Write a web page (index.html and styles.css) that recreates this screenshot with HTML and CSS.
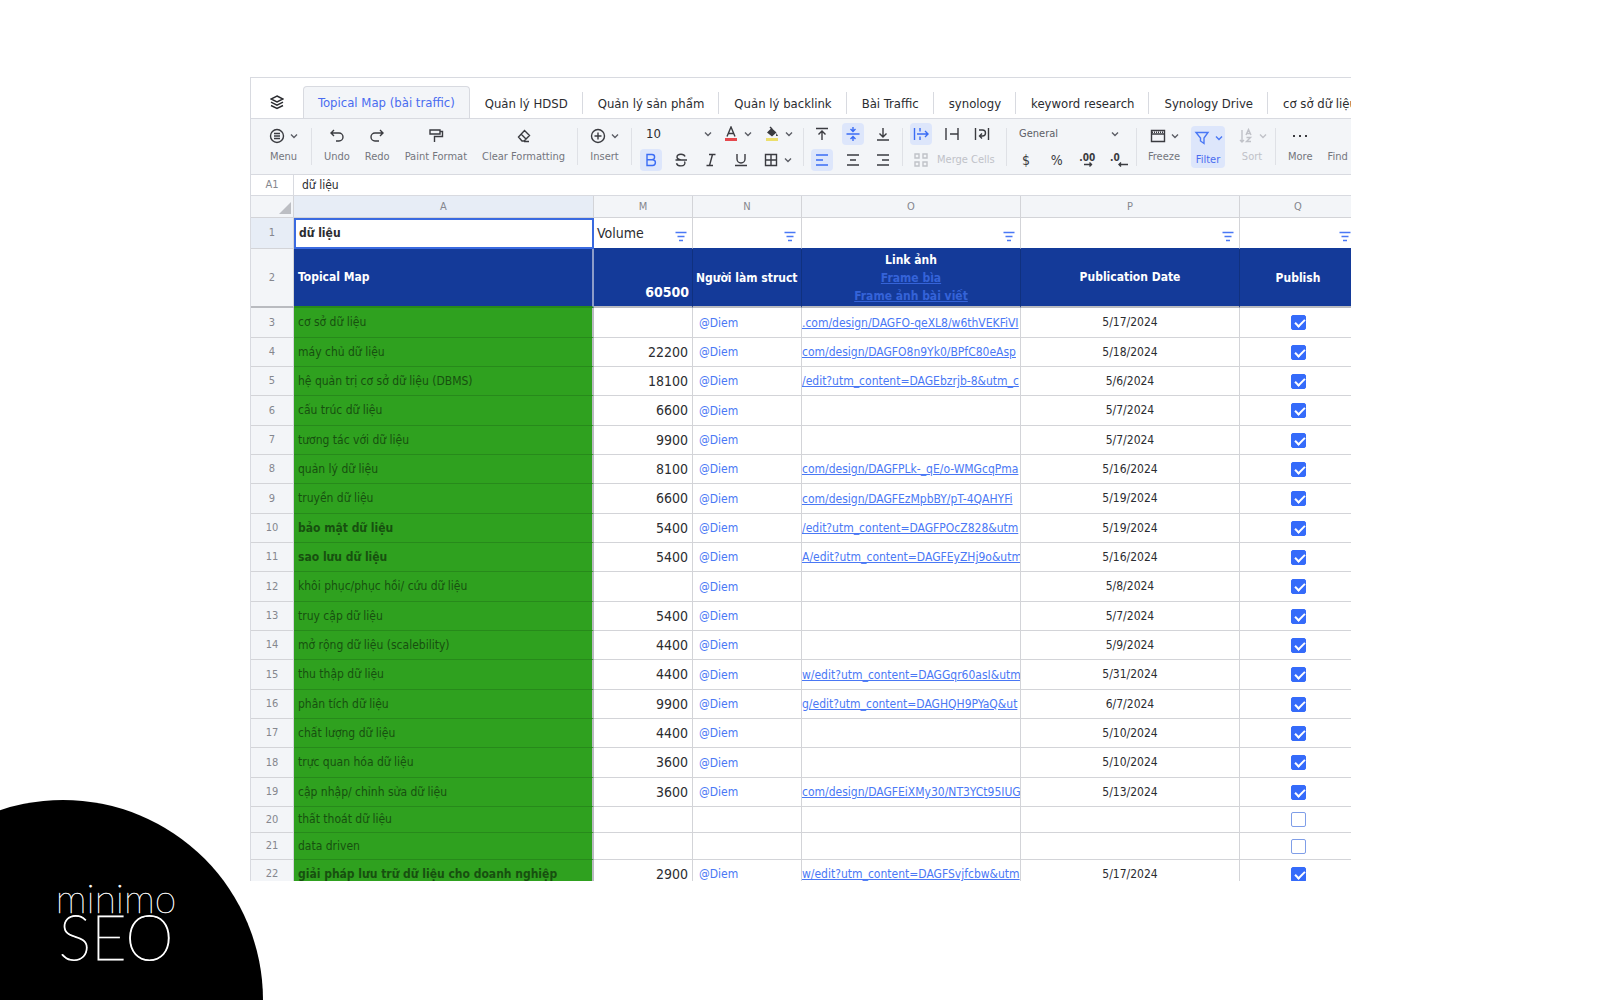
FILE: index.html
```html
<!DOCTYPE html>
<html lang="vi">
<head>
<meta charset="utf-8">
<title>Topical Map (bài traffic)</title>
<link rel="stylesheet" href="styles.css">
</head>
<body>
<svg class="defs" aria-hidden="true">
  <symbol id="chev" viewBox="0 0 8 8"><path d="M1 2.5l3 3 3-3"/></symbol>
  <symbol id="filter" viewBox="0 0 12 11"><path d="M0.5 1.5h11M2.5 5.5h7M4 9.5h4"/></symbol>
</svg>
<main class="page">
  <section class="sheet">
    <nav class="tabs" aria-label="Sheets">
      <button class="layers" aria-label="All sheets"><svg width="14" height="15" viewBox="0 0 14 15"><path d="M7 1L13 4 7 7 1 4zM1 7.200l6 3 6-3M1 10.500l6 3 6-3"/></svg></button>
      <button class="tab active">Topical Map (bài traffic)</button>
      <button class="tab">Quản lý HDSD</button>
      <button class="tab">Quản lý sản phẩm</button>
      <button class="tab">Quản lý backlink</button>
      <button class="tab">Bài Traffic</button>
      <button class="tab">synology</button>
      <button class="tab">keyword research</button>
      <button class="tab">Synology Drive</button>
      <button class="tab">cơ sở dữ liệu</button>
    </nav>

    <div class="toolbar" role="toolbar">
      <div class="group menu">
        <button class="tool"><span class="ico"><svg width="16" height="16" viewBox="0 0 16 16"><circle cx="8" cy="8" r="6.500"/><path d="M5 5.500h6M5 8h6M5 10.500h6"/></svg><svg class="chev"><use href="#chev"/></svg></span>Menu</button>
      </div>
      <div class="group edit">
        <button class="tool"><span class="ico"><svg width="16" height="16" viewBox="0 0 16 16"><path d="M5 2L2 5l3 3M2 5h8a4 4 0 0 1 0 8H7"/></svg></span>Undo</button>
        <button class="tool"><span class="ico"><svg width="16" height="16" viewBox="0 0 16 16"><path d="M11 2l3 3-3 3M14 5H6a4 4 0 0 0 0 8h4"/></svg></span>Redo</button>
        <button class="tool"><span class="ico"><svg width="16" height="16" viewBox="0 0 16 16"><path d="M2 2h10v4H2zM12 3.500h2.500v5H6.500V14"/></svg></span>Paint Format</button>
        <button class="tool"><span class="ico"><svg width="16" height="16" viewBox="0 0 16 16"><path d="M8.500 2.500l5 5-5.500 5.500H6L2.500 9zM5 6l5 5M8 13.500h5"/></svg></span>Clear Formatting</button>
      </div>
      <div class="group insert">
        <button class="tool"><span class="ico"><svg width="16" height="16" viewBox="0 0 16 16"><circle cx="8" cy="8" r="6.500"/><path d="M4.500 8h7M8 4.500v7"/></svg><svg class="chev"><use href="#chev"/></svg></span>Insert</button>
      </div>
      <div class="group stack font">
        <div class="line">
          <label class="pick size"><select aria-label="Font size"><option>10</option></select><svg class="chev"><use href="#chev"/></svg></label>
          <button class="split" aria-label="Text color"><svg width="16" height="16" viewBox="0 0 16 16"><path d="M4 10.500L8 1l4 9.500M5.200 7.500h5.600"/><path class="red" d="M2 13.500h12"/></svg><svg class="chev"><use href="#chev"/></svg></button>
          <button class="split" aria-label="Fill color"><svg width="16" height="16" viewBox="0 0 16 16"><path class="solid" d="M3 6.500L7.500 2l5 4.500-4.500 4zM12.500 7l1.500 3h-2z"/><path d="M6 1l2 2"/><path class="yellow" d="M2 13.500h12"/></svg><svg class="chev"><use href="#chev"/></svg></button>
        </div>
        <div class="line">
          <button class="sq on" aria-label="Bold"><svg width="16" height="16" viewBox="0 0 16 16"><path d="M4 2.500h5a2.600 2.600 0 0 1 0 5.200H4zM4 7.700h5.500a2.900 2.900 0 0 1 0 5.800H4z"/></svg></button>
          <button class="sq" aria-label="Strikethrough"><svg width="16" height="16" viewBox="0 0 16 16"><path d="M12 4.500C11.500 3 10 2.200 8 2.200 5.500 2.200 4 3.400 4 5c0 1.500 1.500 2.400 4 3M2.500 8h11.500M11.500 9.500c1.500 2.500-.5 4.400-3.500 4.400-2.500 0-4-1-4.500-2.700"/></svg></button>
          <button class="sq" aria-label="Italic"><svg width="16" height="16" viewBox="0 0 16 16"><path d="M6 2.500h6.500M3.500 13.500H10M9.500 2.500l-3 11"/></svg></button>
          <button class="sq" aria-label="Underline"><svg width="16" height="16" viewBox="0 0 16 16"><path d="M4 2v5a4 4 0 0 0 8 0V2M2 13.500h12"/></svg></button>
          <button class="split" aria-label="Borders"><svg width="16" height="16" viewBox="0 0 16 16"><path d="M2.500 2.500h11v11h-11zM8 2.500v11M2.500 8h11"/></svg><svg class="chev"><use href="#chev"/></svg></button>
        </div>
      </div>
      <div class="group stack align">
        <div class="line">
          <button class="sq" aria-label="Align top"><svg width="16" height="16" viewBox="0 0 16 16"><path d="M2 2.500h12M8 14V5M4.500 8.500L8 5l3.500 3.500"/></svg></button>
          <button class="sq on" aria-label="Align middle"><svg width="16" height="16" viewBox="0 0 16 16"><path d="M1.500 8h13M8 1v4M5.500 3L8 5.500 10.500 3M8 15v-4M5.500 13L8 10.500l2.500 2.500"/></svg></button>
          <button class="sq" aria-label="Align bottom"><svg width="16" height="16" viewBox="0 0 16 16"><path d="M2 14h12M8 2v9M4.500 7.500L8 11l3.500-3.500"/></svg></button>
        </div>
        <div class="line">
          <button class="sq on" aria-label="Align left"><svg width="16" height="16" viewBox="0 0 16 16"><path d="M2 3h12M2 8h7M2 13h12"/></svg></button>
          <button class="sq" aria-label="Align center"><svg width="16" height="16" viewBox="0 0 16 16"><path d="M2 3h12M5 8h6M2 13h12"/></svg></button>
          <button class="sq" aria-label="Align right"><svg width="16" height="16" viewBox="0 0 16 16"><path d="M2 3h12M7 8h7M2 13h12"/></svg></button>
        </div>
      </div>
      <div class="group stack wrap">
        <div class="line">
          <button class="sq on" aria-label="Overflow"><svg width="16" height="16" viewBox="0 0 16 16"><path d="M1.500 2v12M7 2v3.500M7 10.500V14M4 8h11M12 5l3 3-3 3"/></svg></button>
          <button class="sq" aria-label="Clip"><svg width="16" height="16" viewBox="0 0 16 16"><path d="M2 2v12M14 2v12M6 8h8"/></svg></button>
          <button class="sq" aria-label="Wrap"><svg width="16" height="16" viewBox="0 0 16 16"><path d="M1.500 2v12M14.500 2v12M5 4h3.500a3 3 0 0 1 0 6H6M8 7.500L5.500 10 8 12.500"/></svg></button>
        </div>
        <div class="line">
          <button class="merge" disabled><svg width="16" height="16" viewBox="0 0 16 16"><path d="M2 2h4v4H2zM10 2h4v4h-4zM2 10h4v4H2zM10 10h4v4h-4z"/></svg>Merge Cells</button>
        </div>
      </div>
      <div class="group stack number">
        <div class="line">
          <label class="pick format"><select aria-label="Number format"><option>General</option></select><svg class="chev"><use href="#chev"/></svg></label>
        </div>
        <div class="line">
          <button class="sq sign">$</button>
          <button class="sq sign">%</button>
          <button class="sq dec" aria-label="Increase decimals">.00<svg width="12" height="5" viewBox="0 0 12 5"><path d="M3 2.500h8M8.500 .5l2 2-2 2"/></svg></button>
          <button class="sq dec less" aria-label="Decrease decimals">.0<svg width="12" height="5" viewBox="0 0 12 5"><path d="M2 2.500h9M4 .5l-2 2 2 2"/></svg></button>
        </div>
      </div>
      <div class="group view">
        <button class="tool"><span class="ico"><svg width="16" height="16" viewBox="0 0 16 16"><path d="M1.500 2.500h13v11h-13zM1.500 6h13"/><path class="dots" d="M2 4.200h12"/></svg><svg class="chev"><use href="#chev"/></svg></span>Freeze</button>
        <button class="tool on"><span class="ico"><svg width="16" height="16" viewBox="0 0 16 16"><path d="M2 2.500h12L10 8v5.500L6.500 11V8z"/></svg><svg class="chev"><use href="#chev"/></svg></span>Filter</button>
        <button class="tool" disabled><span class="ico"><svg width="16" height="16" viewBox="0 0 16 16"><path d="M4 2v12M2 12l2 2 2-2M8 7l2.500-5.500L13 7M9 5.500h3M8.500 9.500h4l-4 4h4.500"/></svg><svg class="chev"><use href="#chev"/></svg></span>Sort</button>
      </div>
      <div class="group more">
        <button class="tool"><span class="ico"><svg width="16" height="16" viewBox="0 0 16 16"><path class="solid" d="M1 7h2v2H1zM7 7h2v2H7zM13 7h2v2h-2z"/></svg></span>More</button>
        <button class="tool"><span class="ico"></span>Find</button>
      </div>
    </div>

    <div class="formula">
      <input class="ref" aria-label="Cell" value="A1">
      <input class="value" aria-label="Cell content" value="dữ liệu">
    </div>

    <div class="grid">
      <table>
        <colgroup><col class="c-n"><col class="c-a"><col class="c-m"><col class="c-who"><col class="c-link"><col class="c-link"><col class="c-q"></colgroup>
        <thead>
          <tr><th class="corner"><svg width="12" height="12" viewBox="0 0 12 12"><path d="M12 0v12H0z"/></svg></th><th class="sel">A</th><th>M</th><th>N</th><th>O</th><th>P</th><th>Q</th></tr>
        </thead>
        <tbody>
          <tr class="r1"><th class="sel">1</th><td class="cursor">dữ liệu</td><td class="vol"><div class="fcell">Volume<svg class="filter"><use href="#filter"/></svg></div></td><td><div class="fcell"><svg class="filter"><use href="#filter"/></svg></div></td><td><div class="fcell"><svg class="filter"><use href="#filter"/></svg></div></td><td><div class="fcell"><svg class="filter"><use href="#filter"/></svg></div></td><td><div class="fcell"><svg class="filter"><use href="#filter"/></svg></div></td></tr>
          <tr class="r2"><th>2</th><td>Topical Map</td><td class="total">60500</td><td class="who">Người làm struct</td><td class="mid">Link ảnh<br><a href="#">Frame bìa</a><br><a href="#">Frame ảnh bài viết</a></td><td class="mid">Publication Date</td><td class="mid">Publish</td></tr>
          <tr><th>3</th><td>cơ sở dữ liệu</td><td></td><td><a href="#">@Diem</a></td><td><a href="#">.com/design/DAGFO-qeXL8/w6thVEKFiVI</a></td><td>5/17/2024</td><td><input type="checkbox" aria-label="Publish 3" checked></td></tr>
          <tr><th>4</th><td>máy chủ dữ liệu</td><td>22200</td><td><a href="#">@Diem</a></td><td><a href="#">com/design/DAGFO8n9Yk0/BPfC80eAsp</a></td><td>5/18/2024</td><td><input type="checkbox" aria-label="Publish 4" checked></td></tr>
          <tr><th>5</th><td>hệ quản trị cơ sở dữ liệu (DBMS)</td><td>18100</td><td><a href="#">@Diem</a></td><td><a href="#">/edit?utm_content=DAGEbzrjb-8&amp;utm_c</a></td><td>5/6/2024</td><td><input type="checkbox" aria-label="Publish 5" checked></td></tr>
          <tr><th>6</th><td>cấu trúc dữ liệu</td><td>6600</td><td><a href="#">@Diem</a></td><td></td><td>5/7/2024</td><td><input type="checkbox" aria-label="Publish 6" checked></td></tr>
          <tr><th>7</th><td>tương tác với dữ liệu</td><td>9900</td><td><a href="#">@Diem</a></td><td></td><td>5/7/2024</td><td><input type="checkbox" aria-label="Publish 7" checked></td></tr>
          <tr><th>8</th><td>quản lý dữ liệu</td><td>8100</td><td><a href="#">@Diem</a></td><td><a href="#">com/design/DAGFPLk-_qE/o-WMGcqPma</a></td><td>5/16/2024</td><td><input type="checkbox" aria-label="Publish 8" checked></td></tr>
          <tr><th>9</th><td>truyền dữ liệu</td><td>6600</td><td><a href="#">@Diem</a></td><td><a href="#">com/design/DAGFEzMpbBY/pT-4QAHYFi</a></td><td>5/19/2024</td><td><input type="checkbox" aria-label="Publish 9" checked></td></tr>
          <tr><th>10</th><td class="strong">bảo mật dữ liệu</td><td>5400</td><td><a href="#">@Diem</a></td><td><a href="#">/edit?utm_content=DAGFPOcZ828&amp;utm</a></td><td>5/19/2024</td><td><input type="checkbox" aria-label="Publish 10" checked></td></tr>
          <tr><th>11</th><td class="strong">sao lưu dữ liệu</td><td>5400</td><td><a href="#">@Diem</a></td><td><a href="#">A/edit?utm_content=DAGFEyZHj9o&amp;utm</a></td><td>5/16/2024</td><td><input type="checkbox" aria-label="Publish 11" checked></td></tr>
          <tr><th>12</th><td>khôi phục/phục hồi/ cứu dữ liệu</td><td></td><td><a href="#">@Diem</a></td><td></td><td>5/8/2024</td><td><input type="checkbox" aria-label="Publish 12" checked></td></tr>
          <tr><th>13</th><td>truy cập dữ liệu</td><td>5400</td><td><a href="#">@Diem</a></td><td></td><td>5/7/2024</td><td><input type="checkbox" aria-label="Publish 13" checked></td></tr>
          <tr><th>14</th><td>mở rộng dữ liệu (scalebility)</td><td>4400</td><td><a href="#">@Diem</a></td><td></td><td>5/9/2024</td><td><input type="checkbox" aria-label="Publish 14" checked></td></tr>
          <tr><th>15</th><td>thu thập dữ liệu</td><td>4400</td><td><a href="#">@Diem</a></td><td><a href="#">w/edit?utm_content=DAGGqr60asI&amp;utm</a></td><td>5/31/2024</td><td><input type="checkbox" aria-label="Publish 15" checked></td></tr>
          <tr><th>16</th><td>phân tích dữ liệu</td><td>9900</td><td><a href="#">@Diem</a></td><td><a href="#">g/edit?utm_content=DAGHQH9PYaQ&amp;ut</a></td><td>6/7/2024</td><td><input type="checkbox" aria-label="Publish 16" checked></td></tr>
          <tr><th>17</th><td>chất lượng dữ liệu</td><td>4400</td><td><a href="#">@Diem</a></td><td></td><td>5/10/2024</td><td><input type="checkbox" aria-label="Publish 17" checked></td></tr>
          <tr><th>18</th><td>trực quan hóa dữ liệu</td><td>3600</td><td><a href="#">@Diem</a></td><td></td><td>5/10/2024</td><td><input type="checkbox" aria-label="Publish 18" checked></td></tr>
          <tr><th>19</th><td>cập nhập/ chỉnh sửa dữ liệu</td><td>3600</td><td><a href="#">@Diem</a></td><td><a href="#">com/design/DAGFEiXMy30/NT3YCt95IUG</a></td><td>5/13/2024</td><td><input type="checkbox" aria-label="Publish 19" checked></td></tr>
          <tr class="short"><th>20</th><td>thất thoát dữ liệu</td><td></td><td></td><td></td><td></td><td><input type="checkbox" aria-label="Publish 20"></td></tr>
          <tr class="short"><th>21</th><td>data driven</td><td></td><td></td><td></td><td></td><td><input type="checkbox" aria-label="Publish 21"></td></tr>
          <tr><th>22</th><td class="strong">giải pháp lưu trữ dữ liệu cho doanh nghiệp</td><td>2900</td><td><a href="#">@Diem</a></td><td><a href="#">w/edit?utm_content=DAGFSvjfcbw&amp;utm</a></td><td>5/17/2024</td><td><input type="checkbox" aria-label="Publish 22" checked></td></tr>
        </tbody>
      </table>
    </div>
  </section>
  <div class="badge">
    <div class="brand"><span class="minimo">minimo</span><span class="seo">SEO</span></div>
  </div>
</main>
</body>
</html>
```
FILE: styles.css
```css
* { box-sizing: border-box; }
body { margin: 0; background: #fff; }
button, input, select { font: inherit; color: inherit; margin: 0; padding: 0; border: 0; background: none; }
select { appearance: none; }
.defs { display: none; }
svg { fill: none; stroke: currentColor; stroke-width: 1.4; flex: none; }

.page {
  position: relative;
  display: flex;
  height: 100vh;
  padding: 77px 249px 119px 250px;
  overflow: hidden;
  font: 12px/16px "DejaVu Sans Condensed", "DejaVu Sans", sans-serif;
  color: #2b2c30;
}
.sheet {
  display: flex;
  flex-direction: column;
  flex: 1;
  min-width: 0;
  overflow: hidden;
  border: 1px solid #d8dae0;
  border-width: 1px 0 0 1px;
}

/* sheet tabs */
.tabs { display: flex; align-items: flex-end; height: 40px; flex: none; }
.layers { display: flex; flex: none; align-items: center; justify-content: center; width: 52px; height: 32px; }
.tab { flex: none; height: 22px; margin-bottom: 4px; padding: 2px 14px 0 15px; border-right: 1px solid #d8dae0; font-size: 13px; white-space: nowrap; }
.tab.active { height: 32px; margin: 0; padding: 0 14px; border: 1px solid #d8dae0; border-bottom: 0; border-radius: 4px 4px 0 0; background: #f3f5f8; color: #4a6cf0; }

/* toolbar */
.toolbar { display: flex; flex: none; height: 57px; padding: 9px 0; background: #f3f5f8; border: 1px solid #d8dae0; border-width: 1px 0; font-size: 11px; }
.group { display: flex; flex: none; justify-content: center; border-right: 1px solid #dfe1e6; }
.menu { width: 61px; padding-left: 5px; }
.edit { width: 266px; gap: 15px; }
.insert { width: 54px; }
.font { width: 172px; padding: 0 8px; }
.align { width: 99px; padding: 0 9px 0 7px; }
.wrap { width: 104px; padding: 0 14px 0 7px; }
.number { width: 130px; padding: 0 8px; }
.view { width: 139px; justify-content: flex-start; padding-left: 10px; gap: 10px; }
.more { border: 0; padding-left: 12px; gap: 15px; }
.tool { display: flex; flex-direction: column; align-items: center; color: #74767d; white-space: nowrap; }
.view .tool { width: 34px; }
.ico { display: flex; align-items: center; gap: 5px; height: 20px; margin-bottom: 5px; color: #3a3b40; }
.chev { width: 8px; height: 8px; color: #5c5e66; }
.tool.on { height: 42px; margin-top: -2px; padding-top: 2px; border-radius: 4px; background: #dde6fb; color: #4a6cf0; }
.on .ico, .on .chev { color: #4a78f5; }
.tool:disabled, .tool:disabled .ico, .tool:disabled .chev { color: #c0c2c8; }
.stack { flex-direction: column; justify-content: space-between; margin: -6px 0; padding-top: 1px; padding-bottom: 0; border: 0; background: linear-gradient(#dfe1e6, #dfe1e6) right 6px / 1px 38px no-repeat; }
.line { display: flex; justify-content: space-between; }
.sq { display: flex; align-items: center; justify-content: center; width: 22px; height: 22px; border-radius: 4px; color: #3a3b40; }
.sq.on { background: #dde6fb; color: #3a6cf5; }
.font .line { justify-content: flex-start; gap: 8px; }
.split { display: flex; align-items: center; gap: 5px; width: 33px; height: 22px; padding-left: 3px; color: #3a3b40; }
.red { stroke: #e5484d; stroke-width: 3; }
.yellow { stroke: #ecdf6c; stroke-width: 3; }
.solid { fill: currentColor; stroke: none; }
.dots { stroke-dasharray: 1 1; }
.pick { display: flex; align-items: center; height: 22px; }
.pick select { flex: 1; min-width: 0; }
.size { width: 72px; padding: 0 0 0 6px; font-size: 13px; }
.format { width: 100%; padding: 0 10px 0 4px; color: #5c5e66; }
.merge { display: flex; align-items: center; gap: 8px; height: 22px; padding-left: 3px; color: #c0c2c8; white-space: nowrap; }
.sign { font-size: 14px; }
.dec { flex-direction: column; font-size: 10px; line-height: 9px; font-weight: bold; }
.less { align-items: flex-start; padding-left: 3px; }
.less svg { align-self: flex-end; }

/* formula bar */
.formula { display: flex; flex: none; height: 20px; }
.ref { width: 43px; border-right: 1px solid #d8dae0; text-align: center; color: #85878e; font-size: 11px; }
.value { flex: 1; min-width: 0; padding: 0 8px; }

/* cells */
.grid { flex: 1; min-height: 0; overflow: hidden; }
table { border-collapse: separate; border-spacing: 0; table-layout: fixed; width: 1106px; border-top: 1px solid #d8dae0; }
.c-n { width: 43px; }
.c-a { width: 300px; }
.c-m { width: 99px; }
.c-who { width: 109px; }
.c-link { width: 219px; }
.c-q { width: 117px; }
th, td { height: 29px; padding: 0; border: 1px solid #d3d4d8; border-width: 0 1px 1px 0; overflow: hidden; white-space: nowrap; }
th { background: #f3f5f8; color: #85878e; font-weight: normal; font-size: 11px; }
thead th { height: 22px; }
th.sel { background: #e7edf6; }
.corner { text-align: right; vertical-align: bottom; line-height: 0; padding: 0 2px 3px 0; }
.corner svg { fill: #bcbec3; stroke: none; }
tr:nth-child(3n) > * { height: 30px; }
.short > * { height: 26px; }
tr.short:nth-child(3n) > * { height: 27px; }
a { color: #4a78f5; }
td:nth-child(2) { padding: 0 4px 1px; background: #2fa11f; color: #17500f; border-bottom-color: #278a1b; border-right: 2px solid #b9bbc0; }
td:nth-child(3) { padding: 0 4px 1px 0; text-align: right; font-size: 14px; }
td:nth-child(4) { padding-left: 6px; }
td:nth-child(4) a { text-decoration: none; }
td:nth-child(6) { padding-bottom: 1px; }
td:nth-child(6), td:nth-child(7) { text-align: center; }
td.strong { font-weight: bold; }
.r1 > * { height: 31px; }
.r1 td.cursor { background: #fff; color: #2b2c30; font-weight: bold; border: 2px solid #3a6ae0; padding-left: 3px; }
.r1 td:nth-child(n+3) { padding: 0 5px 1px 3px; border-bottom-color: #123a99; }
.fcell { display: flex; align-items: center; }
.filter { width: 12px; height: 11px; margin: 8px 0 0 auto; color: #4a78f5; }
.r2 > *, .r2:nth-child(n) > th { height: 59px; border-bottom: 2px solid #b9bbc0; }
.r2 td:nth-child(n) { background: #143a99; color: #fff; font-weight: bold; border-right-color: #10317f; line-height: 18px; }
.r2 td:nth-child(2) { border-right-color: #8c9cc8; }
.r2 td.total { vertical-align: bottom; padding: 0 3px 5px 0; }
.r2 td.who { padding-left: 3px; }
.r2 td.mid { text-align: center; }
.r2 a { color: #3563d8; }
input[type="checkbox"] { appearance: none; display: block; width: 15px; height: 15px; margin: 0 auto; border: 1px solid #7f9ee8; border-radius: 2px; }
input[type="checkbox"]:checked { border-color: #356bfa; background: #356bfa; }
input[type="checkbox"]:checked::before { content: ""; display: block; width: 8px; height: 4px; margin: 3px 0 0 3px; border: solid #fff; border-width: 0 0 2px 2px; transform: rotate(-45deg); }

/* brand badge over the page corner */
.badge { position: absolute; left: -137px; bottom: -200px; width: 400px; height: 400px; border-radius: 50%; background: #000; color: #fff; }
.brand { display: flex; flex-direction: column; align-items: center; padding: 82px 0 0 106px; width: 400px; font-family: Lato, sans-serif; font-weight: 100; }
.minimo { font-size: 39px; line-height: 32px; -webkit-text-stroke: 0.4px #fff; }
.seo { font-size: 61px; line-height: 46px; -webkit-text-stroke: 1px #fff; }
```
